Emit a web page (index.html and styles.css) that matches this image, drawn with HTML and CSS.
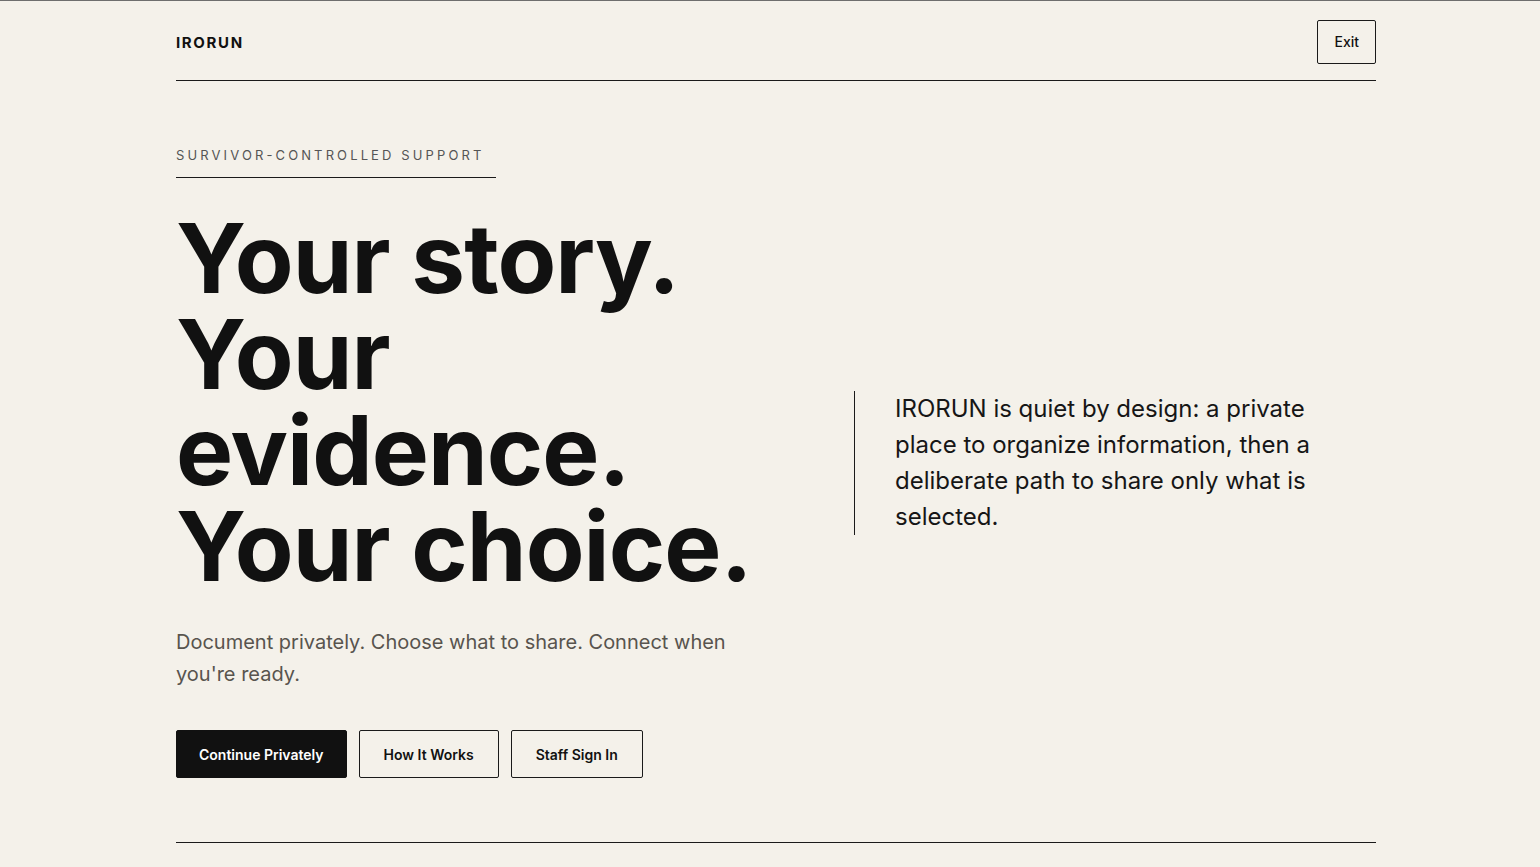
FILE: index.html
```html
<!DOCTYPE html>
<html lang="en">
<head>
<meta charset="utf-8">
<title>IRORUN</title>
<link rel="stylesheet" href="styles.css">
</head>
<body>
<div class="shell">
  <header class="site-header">
    <div class="logo">IRORUN</div>
    <button class="btn-exit" type="button">Exit</button>
  </header>
  <main class="hero">
    <div class="hero-main">
      <div class="eyebrow">SURVIVOR-CONTROLLED SUPPORT</div>
      <h1 class="headline">Your story. Your evidence. Your choice.</h1>
      <p class="lede">Document privately. Choose what to share. Connect when you're ready.</p>
      <div class="actions">
        <button class="btn btn-primary" type="button">Continue Privately</button>
        <button class="btn btn-outline" type="button">How It Works</button>
        <button class="btn btn-outline" type="button">Staff Sign In</button>
      </div>
    </div>
    <aside class="hero-side">
      <p class="quote">IRORUN is quiet by design: a private place to organize information, then a deliberate path to share only what is selected.</p>
    </aside>
  </main>
</div>
</body>
</html>
```

FILE: styles.css
```css
* { box-sizing: border-box; }
html, body { margin: 0; padding: 0; }
body {
  background: #f4f1ea;
  color: #111;
  font-family: Inter, "Noto Sans", "Liberation Sans", sans-serif;
  border-top: 1px solid #6e6e6e;
  min-height: 100vh;
}
.shell {
  width: 1200px;
  margin-left: 176px;
}
.site-header {
  display: flex;
  align-items: center;
  justify-content: space-between;
  padding: 19px 0 16px;
  border-bottom: 1px solid #1a1a1a;
}
.logo {
  font-size: 15px;
  font-weight: 700;
  letter-spacing: 0.11em;
  padding-top: 1px;
}
.btn-exit {
  font-family: inherit;
  font-size: 14px;
  font-weight: 500;
  color: #111;
  background: transparent;
  border: 1px solid #1a1a1a;
  border-radius: 2px;
  padding: 12px 16px;
  line-height: 18px;
  cursor: pointer;
}
.hero {
  display: grid;
  grid-template-columns: minmax(0, 1fr) 522px;
  column-gap: 80px;
  align-items: center;
  padding: 63px 0 64px;
  border-bottom: 1px solid #1a1a1a;
}
.eyebrow {
  display: inline-block;
  white-space: nowrap;
  font-size: 13px;
  line-height: 20px;
  letter-spacing: 0.24em;
  color: #555;
  padding: 0 0 12px 0;
  border-bottom: 1px solid #1a1a1a;
  width: 320px;
}
.headline {
  margin: 32px 0 0;
  font-size: 96px;
  line-height: 1;
  font-weight: 700;
  letter-spacing: -0.01em;
  color: #111;
}
.lede {
  margin: 32px 0 0;
  max-width: 560px;
  font-size: 20px;
  line-height: 32px;
  color: #58544e;
}
.actions {
  display: flex;
  gap: 12px;
  margin-top: 40px;
}
.btn {
  font-family: inherit;
  font-size: 14px;
  font-weight: 600;
  height: 48px;
  padding: 0 24px;
  border-radius: 2px;
  cursor: pointer;
}
.btn-primary {
  background: #111;
  color: #fff;
  border: 1px solid #111;
  padding: 0 22px;
}
.btn-outline {
  background: transparent;
  color: #111;
  border: 1px solid #1a1a1a;
}
.hero-side {
  padding-top: 3px;
}
.quote {
  margin: 0;
  padding-left: 40px;
  border-left: 1px solid #1a1a1a;
  font-size: 24px;
  line-height: 36px;
  max-width: 460px;
  color: #161616;
}
```
